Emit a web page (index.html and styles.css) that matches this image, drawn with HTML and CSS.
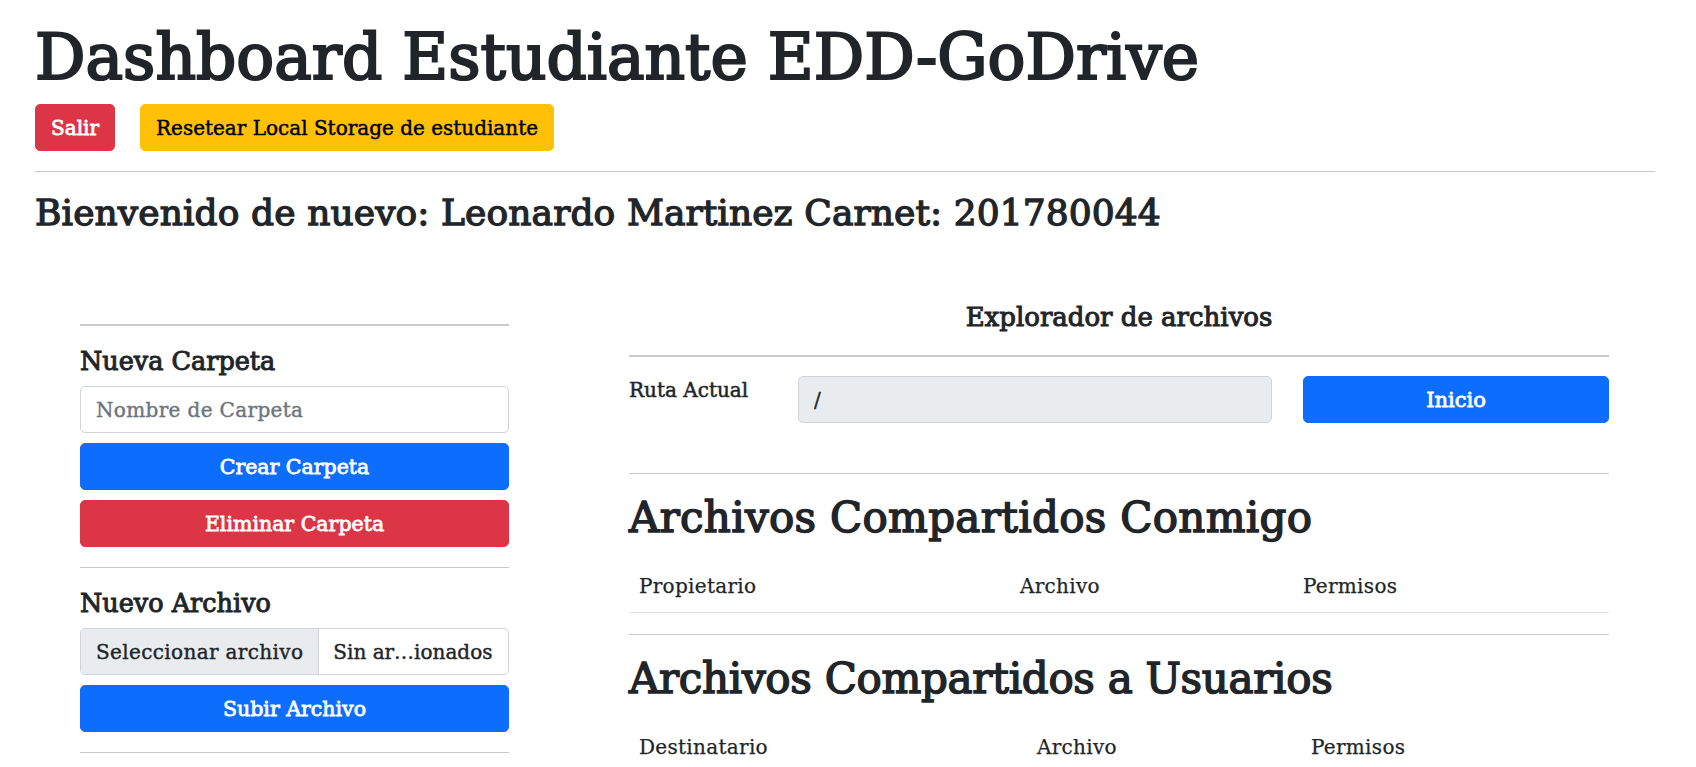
FILE: index.html
```html
<!DOCTYPE html>
<html lang="es">
<head>
<meta charset="utf-8">
<title>Dashboard Estudiante EDD-GoDrive</title>
<link rel="stylesheet" href="styles.css">
</head>
<body>
<div class="page">
  <h1 class="title">Dashboard Estudiante EDD-GoDrive</h1>
  <div class="actions">
    <button class="btn btn-danger">Salir</button>
    <button class="btn btn-warning">Resetear Local Storage de estudiante</button>
  </div>
  <hr class="rule rule-top">
  <h3 class="welcome">Bienvenido de nuevo: Leonardo Martinez Carnet: 201780044</h3>

  <div class="workspace">
    <aside class="sidebar">
      <hr class="rule rule-thick rule-first">
      <h4 class="side-heading">Nueva Carpeta</h4>
      <input class="field" type="text" placeholder="Nombre de Carpeta">
      <button class="btn btn-primary btn-block">Crear Carpeta</button>
      <button class="btn btn-danger btn-block">Eliminar Carpeta</button>
      <hr class="rule rule-side">
      <h4 class="side-heading">Nuevo Archivo</h4>
      <div class="file-input">
        <span class="file-btn">Seleccionar archivo</span>
        <span class="file-name">Sin ar…ionados</span>
      </div>
      <button class="btn btn-primary btn-block">Subir Archivo</button>
      <hr class="rule rule-side">
    </aside>

    <main class="explorer">
      <h5 class="explorer-title">Explorador de archivos</h5>
      <hr class="rule rule-thick rule-explorer">
      <div class="path-row">
        <label class="path-label">Ruta Actual</label>
        <input class="field field-disabled" type="text" value="/" readonly>
        <button class="btn btn-primary path-btn">Inicio</button>
      </div>
      <hr class="rule rule-path">
      <h2 class="section-title section-title-in">Archivos Compartidos Conmigo</h2>
      <table class="share-table share-in">
        <thead>
          <tr><th>Propietario</th><th>Archivo</th><th>Permisos</th></tr>
        </thead>
        <tbody></tbody>
      </table>
      <hr class="rule rule-section">
      <h2 class="section-title section-title-out">Archivos Compartidos a Usuarios</h2>
      <table class="share-table share-out">
        <thead>
          <tr><th>Destinatario</th><th>Archivo</th><th>Permisos</th></tr>
        </thead>
        <tbody></tbody>
      </table>
    </main>
  </div>
</div>
</body>
</html>
```

FILE: styles.css
```css
* { box-sizing: border-box; }

html, body {
  margin: 0;
  padding: 0;
}

body {
  font-family: "DejaVu Serif", "Liberation Serif", serif;
  font-size: 20px;
  line-height: 30px;
  color: #212529;
  background: #ffffff;
  overflow: hidden;
}

.page {
  padding: 19px 41px 0 35px;
}

.title {
  margin: 0;
  font-size: 63px;
  line-height: 77px;
  font-weight: 400;
  -webkit-text-stroke: 2.2px #212529;
}

.actions {
  display: flex;
  gap: 25px;
  margin-top: 8px;
}

.btn {
  font-family: inherit;
  font-size: 20px;
  line-height: 30px;
  padding: 7.5px 15px;
  border: 1px solid transparent;
  border-radius: 5px;
  text-align: center;
  cursor: pointer;
  -webkit-text-stroke: 0.8px currentColor;
}

.btn-danger { background: #dc3545; border-color: #dc3545; color: #ffffff; }
.btn-warning { background: #ffc107; border-color: #ffc107; color: #000000; -webkit-text-stroke: 0.45px #000000; }
.btn-primary { background: #0d6efd; border-color: #0d6efd; color: #ffffff; }

.btn-block {
  display: block;
  width: 100%;
  margin-top: 10px;
  font-size: 20.5px;
}

.rule {
  height: 0;
  margin: 0;
  border: 0;
  border-top: 1px solid #c8c9ca;
}

.rule-thick { border-top: 2px solid #c9cacb; }

.rule-top { margin-top: 20px; }

.welcome {
  margin: 19px 0 0;
  font-size: 36px;
  line-height: 43px;
  font-weight: 400;
  letter-spacing: 0.1px;
  -webkit-text-stroke: 1.3px #212529;
}

.workspace {
  display: flex;
  gap: 120px;
  margin-top: 70px;
  padding: 0 46px 0 45px;
}

.sidebar {
  flex: 0 0 429px;
  width: 429px;
  min-width: 0;
  padding-top: 20px;
}

.side-heading {
  margin: 20px 0 9px;
  font-size: 25.5px;
  line-height: 31px;
  font-weight: 400;
  -webkit-text-stroke: 1px #212529;
}

.rule-side { margin-top: 20px; }

.field {
  display: block;
  width: 100%;
  height: 47px;
  padding: 7.5px 15px;
  font-family: inherit;
  font-size: 20px;
  line-height: 30px;
  letter-spacing: 0.35px;
  color: #212529;
  background: #ffffff;
  border: 1px solid #ced4da;
  border-radius: 5px;
  outline: none;
  -webkit-text-stroke: 0.4px currentColor;
}

.field::placeholder { color: #6c757d; }

.field-disabled { background: #e9ecef; }

.file-input {
  display: flex;
  height: 47px;
  min-width: 0;
  border: 1px solid #ced4da;
  border-radius: 5px;
  overflow: hidden;
  white-space: nowrap;
  letter-spacing: 0.35px;
  -webkit-text-stroke: 0.4px #212529;
}

.file-btn {
  flex: 0 0 237px;
  padding: 7.5px 15px;
  background: #e9ecef;
  border-right: 1px solid #ced4da;
}

.file-name {
  flex: 1;
  min-width: 0;
  padding: 7.5px 14px;
  overflow: hidden;
  letter-spacing: 0;
}

.explorer {
  flex: 0 0 980px;
  width: 980px;
  min-width: 0;
}

.explorer-title {
  margin: 0;
  font-size: 26px;
  line-height: 27px;
  font-weight: 400;
  text-align: center;
  -webkit-text-stroke: 1px #212529;
}

.rule-explorer { margin-top: 24px; }

.path-row {
  display: flex;
  margin-top: 19px;
}

.path-label {
  flex: 0 0 169px;
  padding-top: 0;
  margin-top: -1px;
  -webkit-text-stroke: 0.5px #212529;
}

.path-row .field {
  flex: 0 0 474px;
  width: auto;
}

.path-btn {
  flex: 1;
  margin-left: 31px;
  height: 47px;
  font-size: 21px;
}

.rule-path { margin-top: 50px; }

.section-title {
  margin: 19px 0 0;
  font-size: 42px;
  line-height: 49px;
  font-weight: 400;
  -webkit-text-stroke: 1.5px #212529;
}

.section-title-in { letter-spacing: 0.3px; }
.section-title-out { letter-spacing: -0.3px; }

.share-table {
  width: 100%;
  margin-top: 20px;
  border-collapse: collapse;
  letter-spacing: 0.3px;
}

.share-table th {
  padding: 9px 10px 11px;
  font-weight: 400;
  text-align: left;
  border-bottom: 1px solid #dee2e6;
  -webkit-text-stroke: 0.25px #212529;
}

.share-in th:nth-child(1) { width: 381px; }
.share-in th:nth-child(2) { width: 283px; }
.share-out th:nth-child(1) { width: 398px; }
.share-out th:nth-child(2) { width: 274px; }

.rule-section { margin-top: 21px; }
```
